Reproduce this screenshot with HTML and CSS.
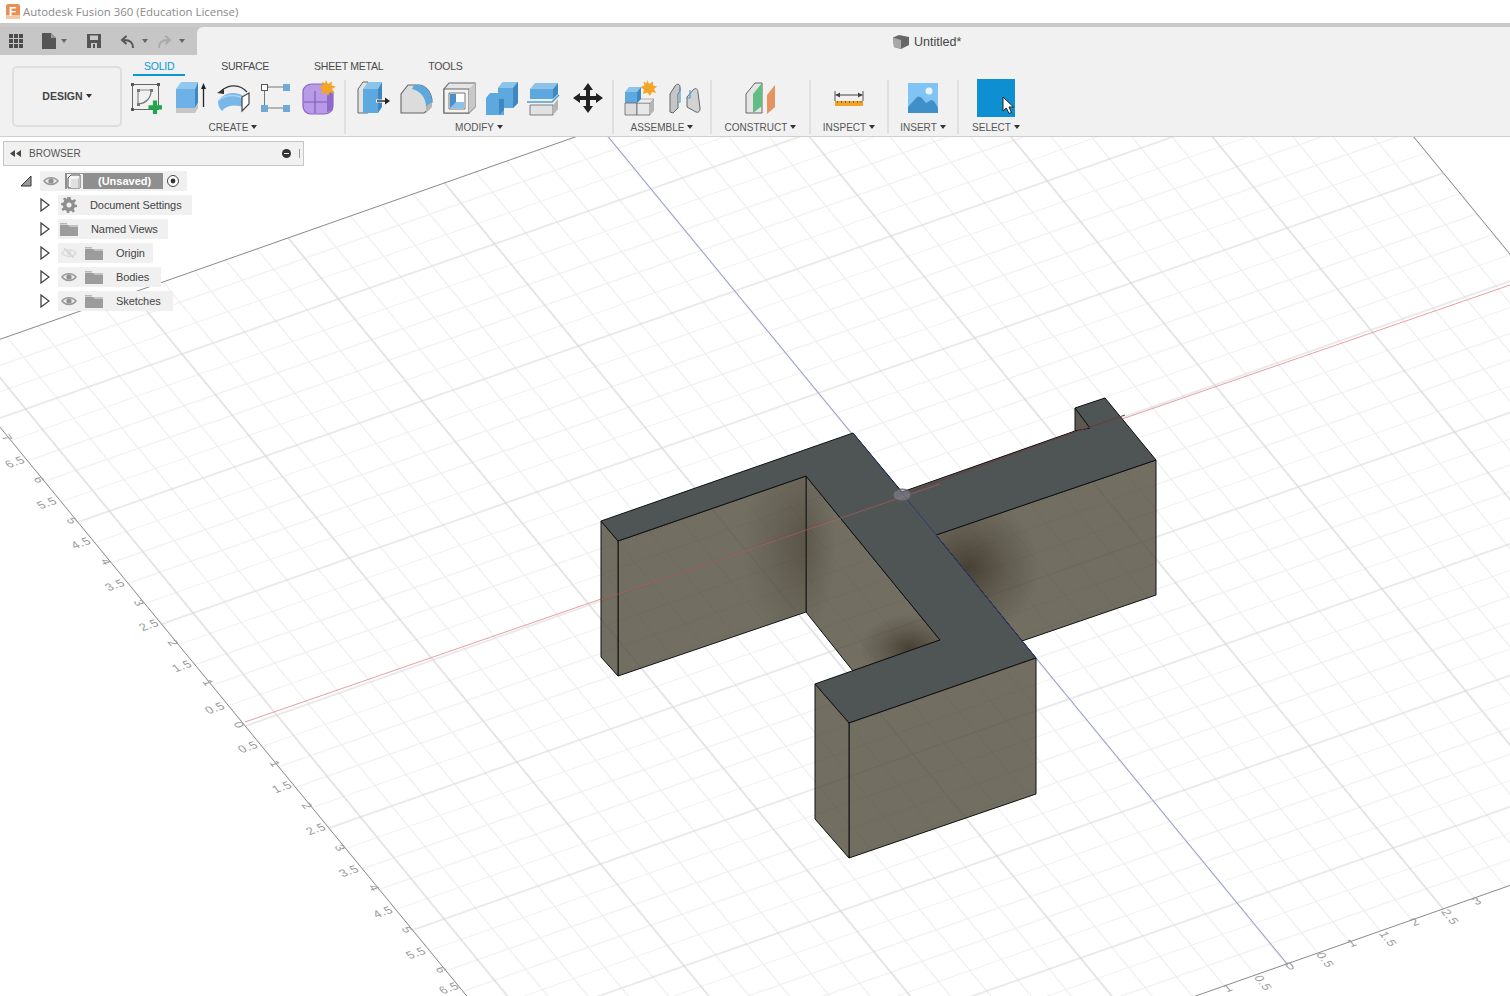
FILE: index.html
```html
<!DOCTYPE html>
<html lang="en">
<head>
<meta charset="utf-8">
<title>Autodesk Fusion 360</title>
<link rel="stylesheet" href="styles.css">
</head>
<body>
<svg class="defs" width="0" height="0" aria-hidden="true">
  <defs>
    <symbol id="eye" viewBox="0 0 16 12"><path d="M1 6C4 1.5 12 1.5 15 6C12 10.5 4 10.5 1 6Z" fill="#e8e8e8" stroke="#9a9a9a" stroke-width="1.5"/><circle cx="8" cy="6" r="2.6" fill="#8f8f8f"/></symbol>
    <symbol id="eye-off" viewBox="0 0 16 12"><path d="M1 6C4 1.5 12 1.5 15 6C12 10.5 4 10.5 1 6Z" fill="none" stroke="#dcdcdc" stroke-width="1.5"/><circle cx="8" cy="6" r="2.4" fill="#dcdcdc"/><path d="M3 1L13 11" stroke="#d4d4d4" stroke-width="1.5"/></symbol>
    <symbol id="folder" viewBox="0 0 18 14"><path d="M0 1H7V2.5H0Z" fill="#b5b5b5"/><path d="M0 3H18V14H0Z" fill="#9c9c9c"/><path d="M0 3H8L10 5H18V3Z" fill="#c4c4c4"/></symbol>
    <symbol id="expand" viewBox="0 0 10 14"><path d="M1 1L9 7L1 13Z" fill="#fff" stroke="#444" stroke-width="1.3"/></symbol>
  </defs>
</svg>

<div class="app">
  <header class="titlebar">
    <svg class="logo" viewBox="0 0 14 15"><rect width="14" height="15" rx="2" fill="#e98f56"/><rect y="11" width="14" height="4" fill="#f6c9a6"/><text x="3" y="12" class="logo-f">F</text></svg>
    <span class="app-title">Autodesk Fusion 360 (Education License)</span>
  </header>
  <div class="strip"></div>

  <div class="qat-row">
    <div class="qat">
      <svg class="qi qi-apps" viewBox="0 0 14 14"><path d="M0 0h4v4H0zM5 0h4v4H5zM10 0h4v4h-4zM0 5h4v4H0zM5 5h4v4H5zM10 5h4v4h-4zM0 10h4v4H0zM5 10h4v4H5zM10 10h4v4h-4z" fill="#4c4c4c"/></svg>
      <svg class="qi qi-file" viewBox="0 0 14 16"><path d="M0 0H9L14 5V16H0Z" fill="#555"/><path d="M9 0V5H14Z" fill="#999"/></svg>
      <i class="caret qc-file"></i>
      <svg class="qi qi-save" viewBox="0 0 14 14"><path d="M0 0H14V14H0Z" fill="#555"/><path d="M3 1.5H11V6H3Z" fill="#c8c8c8"/><path d="M4 9H10V14H4Z" fill="#c8c8c8"/><path d="M6 10H8V14H6Z" fill="#555"/></svg>
      <svg class="qi qi-undo" viewBox="0 0 14 13"><path d="M13 13C13 7 10 5 4 5M6.5 1L2 5L6.5 9" fill="none" stroke="#555" stroke-width="2"/></svg>
      <i class="caret qc-undo"></i>
      <svg class="qi qi-redo" viewBox="0 0 14 13"><path d="M1 13C1 7 4 5 10 5M7.5 1L12 5L7.5 9" fill="none" stroke="#a9a9a9" stroke-width="2"/></svg>
      <i class="caret qc-redo"></i>
    </div>
    <div class="doc-tab">
      <svg class="doc-cube" viewBox="0 0 16 14"><path d="M0 2.5L6 0L16 2L16 10L8 14L1 12Z" fill="#666"/><path d="M0 2.5L8 5V14L1 12Z" fill="#a8a8a8"/></svg>
      <span class="doc-name">Untitled*</span>
    </div>
  </div>

  <div class="ribbon">
    <button class="design-btn">DESIGN<i class="caret dark"></i></button>
    <div class="ribbon-main">
      <nav class="tabs">
        <span class="tab active">SOLID</span>
        <span class="tab">SURFACE</span>
        <span class="tab">SHEET METAL</span>
        <span class="tab">TOOLS</span>
      </nav>
      <div class="groups">
        <section class="group g-create">
          <div class="icons">
            <svg class="ti" viewBox="0 0 36 36">
              <rect x="3.5" y="4.5" width="26" height="25" fill="none" stroke="#666"/>
              <path d="M2 3h3v3H2zM28 3h3v3h-3zM2 28h3v3H2z" fill="#555"/>
              <path d="M9 10H23M9 10V25" stroke="#888" fill="none" stroke-width="1.2"/>
              <path d="M22 11C22 18 17 23 10 24" stroke="#777" fill="none" stroke-width="1.2"/>
              <path d="M8 9h3v3H8zM21 9h3v3h-3zM8 23h3v3H8z" fill="#777"/>
              <path d="M26 20.500V34M19.500 27.300H33" stroke="#21a650" stroke-width="4.200"/>
            </svg>
            <svg class="ti" viewBox="0 0 36 36">
              <path d="M4 9L9 2H26L23 9Z" fill="#93c8ee"/>
              <path d="M4 9H23V28H4Z" fill="#6db1e6"/>
              <path d="M23 9L26 2V23L23 28Z" fill="#3f87c0"/>
              <path d="M4 28H23L26 23V28L23 33H4Z" fill="#c6c6c6"/>
              <path d="M31.500 27V6" stroke="#222" stroke-width="1.300"/>
              <path d="M31.500 3L29 9H34Z" fill="#222"/>
            </svg>
            <svg class="ti" viewBox="0 0 36 36">
              <path d="M6 11C14 4 25 4 32 12" fill="none" stroke="#333" stroke-width="1.200"/>
              <path d="M2 13L9 8.500L9 14Z" fill="#333"/>
              <path d="M3 21C10 11 23 11 29 17L29 28C22 24 12 25 7 31C4 28 3 25 3 21Z" fill="#78b7e8"/>
              <path d="M3 21C10 14 22 14 29 19" fill="none" stroke="#a9d6f5" stroke-width="1.500"/>
              <path d="M27 17L34 13V24L27 31Z" fill="#fff" stroke="#444" stroke-width="1.200"/>
            </svg>
            <svg class="ti" viewBox="0 0 36 36">
              <path d="M11 7H26M7.500 10V25M11 28H26" stroke="#777"/>
              <rect x="4.500" y="4.500" width="6" height="6" fill="#fff" stroke="#555"/>
              <path d="M26 4h7v7h-7zM4 25h7v7H4zM26 25h7v7h-7z" fill="#6fa9d8"/>
            </svg>
            <svg class="ti" viewBox="0 0 36 36">
              <path d="M3 12C3 7 7 4 12 4H26L33 12V26C33 31 29 34 24 34H11C6 34 3 30 3 26Z" fill="#b99ae6" stroke="#8a66c4" stroke-width="1.200"/>
              <path d="M27 14C27 10 31 12 33 14V26C33 29 30 32 27 32Z" fill="#8f6bc9"/>
              <path d="M4 22H27M15 11V33" stroke="#7d5ab8" stroke-width="1.100"/>
              <path d="M26 0L28 4L32 1.500L31.500 5.500L36 6.500L32 9L34.500 13L30 12L28 16L25.500 12.500L21 14L22.500 9.500L18.500 7L23 5.500L22 1.500L25 3.500Z" fill="#f3a526"/>
            </svg>
          </div>
          <span class="glabel">CREATE<i class="caret dark"></i></span>
        </section>

        <section class="group g-modify">
          <div class="icons">
            <svg class="ti" viewBox="0 0 36 36">
              <path d="M3 9L8 2H13V33H3Z" fill="#e2e2e2" stroke="#666"/>
              <path d="M8 9H23V33H8Z" fill="#5ea8e0"/>
              <path d="M8 9L13 2H27L23 9Z" fill="#8cc3ea"/>
              <path d="M23 9L27 2V27L23 33Z" fill="#3f87c0"/>
              <path d="M21 21H31" stroke="#fff" stroke-width="3"/>
              <path d="M22 21H31" stroke="#222" stroke-width="1.400"/>
              <path d="M30 17.500L35 21L30 24.500Z" fill="#222"/>
            </svg>
            <svg class="ti" viewBox="0 0 36 36">
              <path d="M3 33V14L10 5H20C28 5 34 13 34 22L31 27V29L26 33Z" fill="#dcdcdc" stroke="#666" stroke-width="1.100"/>
              <path d="M16 5H20C28 5 34 13 34 22L28 27C28 18 23 11 14 9Z" fill="#5ea8e0"/>
              <path d="M28 27L34 22V27L28 33Z" fill="#b5b5b5"/>
            </svg>
            <svg class="ti" viewBox="0 0 36 36">
              <path d="M3 33V9L8 3H34V27L28 33Z" fill="#e5e5e5" stroke="#666" stroke-width="1.100"/>
              <path d="M3 9H28V33H3Z" fill="#f2f2f2" stroke="#666" stroke-width="1.100"/>
              <path d="M28 9L34 3V27L28 33Z" fill="#c8c8c8"/>
              <path d="M8 13H24V29H8Z" fill="#fff" stroke="#777"/>
              <path d="M9 14H15V22H23V28H9Z" fill="#4a90c8"/>
              <path d="M15 22H23V28H9Z" fill="#8ac2ec"/>
            </svg>
            <svg class="ti" viewBox="0 0 36 36">
              <path d="M14 8L19 2H34L34 23L29 28H14Z" fill="#5ea8e0"/>
              <path d="M14 8L19 2H34L29 8Z" fill="#8cc3ea"/>
              <path d="M29 8L34 2V23L29 28Z" fill="#3f87c0"/>
              <path d="M2 18L6 13H20V35H2Z" fill="#5ea8e0"/>
              <path d="M20 19V30L15 35V19Z" fill="#3f87c0"/>
            </svg>
            <svg class="ti" viewBox="0 0 36 36">
              <path d="M3 9L8 3H31L26 9Z" fill="#8cc3ea"/>
              <path d="M3 9H26V19H3Z" fill="#5ea8e0"/>
              <path d="M26 9L31 3V14L26 19Z" fill="#3f87c0"/>
              <path d="M3 25H26V35H3Z" fill="#e2e2e2" stroke="#666" stroke-width=".8"/>
              <path d="M26 25L31 19V29L26 35Z" fill="#b5b5b5"/>
              <path d="M0 22H25L32 15" stroke="#4a9ed6" stroke-width="1.600" fill="none"/>
            </svg>
            <svg class="ti" viewBox="0 0 36 36">
              <path d="M18 3L23 10H20V16H26V13L33 18L26 23V20H20V26H23L18 33L13 26H16V20H10V23L3 18L10 13V16H16V10H13Z" fill="#222"/>
            </svg>
          </div>
          <span class="glabel">MODIFY<i class="caret dark"></i></span>
        </section>

        <section class="group g-assemble">
          <div class="icons">
            <svg class="ti" viewBox="0 0 36 36">
              <path d="M3 12H15V23H3Z" fill="#5ea8e0"/>
              <path d="M3 12L7 7H19L15 12Z" fill="#8cc3ea"/>
              <path d="M15 12L19 7V19L15 23Z" fill="#3f87c0"/>
              <path d="M3 23H15V35H3Z" fill="#ddd" stroke="#666" stroke-width=".8"/>
              <path d="M15 23H28V35H15Z" fill="#e8e8e8" stroke="#666" stroke-width=".8"/>
              <path d="M28 23L32 19V31L28 35Z" fill="#b5b5b5"/>
              <path d="M15 23L19 19H32L28 23Z" fill="#ededed" stroke="#888" stroke-width=".6"/>
              <path d="M25 0L27 4L31 1.500L31 5.500L35 6.500L32 9L34 13L30 12L28 16L25.500 12.500L21 14L22 9.500L18.500 7L22.500 5.500L21.500 1.500L24.500 3.500Z" fill="#f3a526"/>
            </svg>
            <svg class="ti" viewBox="0 0 36 36">
              <path d="M4 14L9 6C11 3 14 4 14 7V11L12 14V28L7 33L4 32Z" fill="#c6c6c6" stroke="#666"/>
              <path d="M21 17L28 9C30 8 32 9 32 13L34 28C34 31 33 33 30 32L21 27Z" fill="#d2d2d2" stroke="#666"/>
              <path d="M14 8V22H12M24 10V18H20" stroke="#4a9ed6" fill="none" stroke-width="1.200"/>
            </svg>
          </div>
          <span class="glabel">ASSEMBLE<i class="caret dark"></i></span>
        </section>

        <section class="group g-construct">
          <div class="icons">
            <svg class="ti" viewBox="0 0 36 36">
              <path d="M3 14L12 3H19V33H3Z" fill="#e5e5e5" stroke="#666"/>
              <path d="M10 14L19 3V26L10 33Z" fill="#63bd83"/>
              <path d="M24 15L32 5V27L24 34Z" fill="#e6935f"/>
            </svg>
          </div>
          <span class="glabel">CONSTRUCT<i class="caret dark"></i></span>
        </section>

        <section class="group g-inspect">
          <div class="icons">
            <svg class="ti" viewBox="0 0 36 36">
              <path d="M4 11V21M32 11V21" stroke="#555"/>
              <path d="M4.500 15H31.500" stroke="#444"/>
              <path d="M4.500 15L9 12.500V17.500ZM31.500 15L27 12.500V17.500Z" fill="#444"/>
              <path d="M4 21H32V26H4Z" fill="#f0a428"/>
              <path d="M6.500 21V23M10.500 21V23M14.500 21V23M18.500 21V23M22.500 21V23M26.500 21V23M30 21V23" stroke="#8a5d10"/>
            </svg>
          </div>
          <span class="glabel">INSPECT<i class="caret dark"></i></span>
        </section>

        <section class="group g-insert">
          <div class="icons">
            <svg class="ti" viewBox="0 0 36 36">
              <path d="M3 3H33V33H3Z" fill="#7fc4f4"/>
              <circle cx="24" cy="11" r="3.500" fill="#e9f5fd"/>
              <path d="M3 27L12 17C15 15 18 19 21 23L26 20C29 20 31 24 33 28V33H3Z" fill="#3f8fc9"/>
            </svg>
          </div>
          <span class="glabel">INSERT<i class="caret dark"></i></span>
        </section>

        <section class="group g-select">
          <div class="icons select-icon">
            <svg class="sel" viewBox="0 0 38 38">
              <path d="M0 0H38V38H0Z" fill="#0e8fd2"/>
              <path d="M26 18V32L29.300 29L32 34.500L34.500 33.500L32 28H36.500Z" fill="#fff" stroke="#222" stroke-width="1"/>
            </svg>
          </div>
          <span class="glabel">SELECT<i class="caret dark"></i></span>
        </section>
      </div>
    </div>
  </div>

  <main class="viewport">
    <svg class="scene" viewBox="0 137 1510 859">
      <defs>
        <pattern id="grid" patternUnits="userSpaceOnUse" width="100" height="100" patternTransform="matrix(1.563 -.55 .837 1.02 902 495)">
          <path d="M20 0V100M40 0V100M60 0V100M80 0V100M0 20H100M0 40H100M0 60H100M0 80H100" stroke="#ececec" stroke-width=".7" fill="none"/>
          <path d="M0 0V100M100 0V100M0 0H100M0 100H100" stroke="#d6d6d6" stroke-width=".8" fill="none"/>
        </pattern>
        <pattern id="grid-ink" patternUnits="userSpaceOnUse" width="100" height="100" patternTransform="matrix(1.563 -.55 .837 1.02 902 495)">
          <path d="M20 0V100M40 0V100M60 0V100M80 0V100M0 20H100M0 40H100M0 60H100M0 80H100" stroke="#000" stroke-width=".5" fill="none"/>
          <path d="M0 0V100M100 0V100M0 0H100M0 100H100" stroke="#000" stroke-width="1" fill="none"/>
        </pattern>
        <radialGradient id="shade"><stop offset="0" stop-color="#3b3628" stop-opacity=".8"/><stop offset=".55" stop-color="#3b3628" stop-opacity=".3"/><stop offset="1" stop-color="#3b3628" stop-opacity="0"/></radialGradient>
        <clipPath id="c-left"><polygon points="618,541 806,476 806,612 618,676"/></clipPath>
        <clipPath id="c-inner"><polygon points="806,476 940,640 853,671 806,612"/></clipPath>
        <clipPath id="c-right"><polygon points="936,535 1156,460 1156,595 1022,641"/></clipPath>
        <clipPath id="c-walls">
          <polygon points="618,541 806,476 806,612 618,676"/>
          <polygon points="806,476 940,640 853,671 806,612"/>
          <polygon points="936,535 1156,460 1156,595 1022,641"/>
          <polygon points="849,723 1036,658 1036,794 849,858"/>
          <polygon points="815,684 849,723 849,858 815,819"/>
          <polygon points="601,521 618,541 618,676 601,657"/>
        </clipPath>
      </defs>

      <polygon class="plane" points="-56,359 1226,-92 1912,744 630,1195"/>
      <line class="axis-x" x1="245" y1="722" x2="1510" y2="285"/>
      <line class="axis-z" x1="601" y1="128" x2="1288" y2="965"/>

      <g class="labels">
        <text transform="matrix(.94 -.33 .63 .77 215 708)">0.5</text>
        <text transform="matrix(.94 -.33 .63 .77 182 666)">1.5</text>
        <text transform="matrix(.94 -.33 .63 .77 149 625)">2.5</text>
        <text transform="matrix(.94 -.33 .63 .77 115 585)">3.5</text>
        <text transform="matrix(.94 -.33 .63 .77 81 543)">4.5</text>
        <text transform="matrix(.94 -.33 .63 .77 47 503)">5.5</text>
        <text transform="matrix(.94 -.33 .63 .77 15 462)">6.5</text>
        <text transform="matrix(.63 .77 -.94 .33 239 725)">0</text>
        <text transform="matrix(.63 .77 -.94 .33 208 683)">1</text>
        <text transform="matrix(.63 .77 -.94 .33 173 643)">2</text>
        <text transform="matrix(.63 .77 -.94 .33 139 603)">3</text>
        <text transform="matrix(.63 .77 -.94 .33 106 562)">4</text>
        <text transform="matrix(.63 .77 -.94 .33 72 521)">5</text>
        <text transform="matrix(.63 .77 -.94 .33 39 480)">6</text>
        <text transform="matrix(.63 .77 -.94 .33 7 438)">7</text>
        <text transform="matrix(.94 -.33 .63 .77 248 747)">0.5</text>
        <text transform="matrix(.94 -.33 .63 .77 282 787)">1.5</text>
        <text transform="matrix(.94 -.33 .63 .77 316 829)">2.5</text>
        <text transform="matrix(.94 -.33 .63 .77 349 871)">3.5</text>
        <text transform="matrix(.94 -.33 .63 .77 383 912)">4.5</text>
        <text transform="matrix(.94 -.33 .63 .77 416 953)">5.5</text>
        <text transform="matrix(.94 -.33 .63 .77 449 988)">6.5</text>
        <text transform="matrix(.63 .77 -.94 .33 275 764)">1</text>
        <text transform="matrix(.63 .77 -.94 .33 307 806)">2</text>
        <text transform="matrix(.63 .77 -.94 .33 340 848)">3</text>
        <text transform="matrix(.63 .77 -.94 .33 374 888)">4</text>
        <text transform="matrix(.63 .77 -.94 .33 407 930)">5</text>
        <text transform="matrix(.63 .77 -.94 .33 441 970)">6</text>
        <text transform="matrix(.94 -.33 .63 .77 1290 966)">0</text>
        <text transform="matrix(.94 -.33 .63 .77 1352 943)">1</text>
        <text transform="matrix(.94 -.33 .63 .77 1415 922)">2</text>
        <text transform="matrix(.94 -.33 .63 .77 1477 901)">3</text>
        <text transform="matrix(.94 -.33 .63 .77 1228 988)">1</text>
        <text transform="matrix(.63 .77 -.94 .33 1325 960)">0.5</text>
        <text transform="matrix(.63 .77 -.94 .33 1388 939)">1.5</text>
        <text transform="matrix(.63 .77 -.94 .33 1450 917)">2.5</text>
        <text transform="matrix(.63 .77 -.94 .33 1263 983)">0.5</text>
      </g>

      <g class="body">
        <polygon class="wall" points="936,535 1156,460 1156,595 1022,641"/>
        <ellipse cx="968" cy="568" rx="72" ry="70" fill="url(#shade)" clip-path="url(#c-right)"/>
        <polygon class="wall" points="806,476 940,640 853,671 806,612"/>
        <ellipse cx="806" cy="545" rx="30" ry="90" fill="url(#shade)" opacity=".5" clip-path="url(#c-inner)"/>
        <ellipse cx="910" cy="648" rx="50" ry="34" fill="url(#shade)" clip-path="url(#c-inner)"/>
        <polygon class="wall" points="618,541 806,476 806,612 618,676"/>
        <ellipse cx="808" cy="545" rx="66" ry="110" fill="url(#shade)" opacity=".6" clip-path="url(#c-left)"/>
        <polygon class="wall" points="601,521 618,541 618,676 601,657"/>
        <polygon class="wall dark" points="1075,408 1090,428 1075,436"/>
        <polygon class="top" points="601,521 853,433 902,492 1075,431 1090,428 1075,408 1105,398 1156,460 936,535 1036,658 849,723 815,684 940,640 806,476 618,541"/>
        <polygon class="wall" points="849,723 1036,658 1036,794 849,858"/>
        <polygon class="wall" points="815,684 849,723 849,858 815,819"/>
      </g>
      <rect class="walls-grid" x="600" y="450" width="560" height="410" fill="url(#grid-ink)" clip-path="url(#c-walls)"/>
      <path class="axis-through" d="M601 600L806 530L940 484"/>
      <path class="axis-edge-x" d="M912 491L1075 432L1090 427L1125 415"/>
      <path class="axis-edge-z" d="M853 433L902 493L1036 658"/>
      <ellipse class="origin" cx="902" cy="495" rx="9" ry="6"/>
    </svg>

    <aside class="browser">
      <div class="browser-head">
        <svg class="rewind" viewBox="0 0 11 7"><path d="M5 0V7L0 3.500ZM11 0V7L6 3.500Z" fill="#444"/></svg>
        <span class="browser-title">BROWSER</span>
        <span class="minus"></span>
        <span class="grip"></span>
      </div>
      <ul class="tree">
        <li class="node root">
          <svg class="corner" viewBox="0 0 12 12"><path d="M11 1V11H1Z" fill="#999" stroke="#333"/></svg>
          <div class="pill">
            <svg class="eye"><use href="#eye"/></svg>
            <div class="sel-bar">
              <svg class="comp" viewBox="0 0 16 15"><path d="M1 4L4 1H13V14H1Z" fill="#f4f4f4" stroke="#555"/><path d="M4 5H11V14H4Z" fill="#e0e0e0"/><path d="M11 5L13 1V14H11Z" fill="#c4c4c4"/></svg>
              <span class="sel-text">(Unsaved)</span>
            </div>
            <svg class="radio" viewBox="0 0 14 14"><circle cx="7" cy="7" r="5.500" fill="#fff" stroke="#444"/><circle cx="7" cy="7" r="2.400" fill="#333"/></svg>
          </div>
        </li>
        <li class="node">
          <svg class="exp"><use href="#expand"/></svg>
          <div class="pill p-doc">
            <svg class="gear" viewBox="0 0 16 16"><path d="M6.500 0H9.500L10 2.400L11.700 3.200L13.800 1.900L15.100 4L13.300 5.600L13.600 7.300L16 8V10L13.600 10.500L12.800 12.200L14 14.300L11.900 15.600L10.300 13.800L8.700 14L8 16H6L5.500 13.700L3.800 12.900L1.800 14.100L.4 12L2.300 10.400L2.100 8.700L0 8V6L2.400 5.500L3.200 3.800L2 1.800L4.100 .5L5.700 2.300Z" fill="#8f8f8f"/><circle cx="8" cy="8" r="2.500" fill="#f0f0f0"/></svg>
            <span class="ntext t-doc">Document Settings</span>
          </div>
        </li>
        <li class="node">
          <svg class="exp"><use href="#expand"/></svg>
          <div class="pill p-views">
            <svg class="folder"><use href="#folder"/></svg>
            <span class="ntext t-doc">Named Views</span>
          </div>
        </li>
        <li class="node">
          <svg class="exp"><use href="#expand"/></svg>
          <div class="pill p-origin">
            <svg class="eye"><use href="#eye-off"/></svg>
            <svg class="folder f-in"><use href="#folder"/></svg>
            <span class="ntext">Origin</span>
          </div>
        </li>
        <li class="node">
          <svg class="exp"><use href="#expand"/></svg>
          <div class="pill p-bodies">
            <svg class="eye"><use href="#eye"/></svg>
            <svg class="folder f-in"><use href="#folder"/></svg>
            <span class="ntext">Bodies</span>
          </div>
        </li>
        <li class="node">
          <svg class="exp"><use href="#expand"/></svg>
          <div class="pill p-sketches">
            <svg class="eye"><use href="#eye"/></svg>
            <svg class="folder f-in"><use href="#folder"/></svg>
            <span class="ntext">Sketches</span>
          </div>
        </li>
      </ul>
    </aside>
  </main>
</div>
</body>
</html>
```

FILE: styles.css
```css
* { box-sizing: border-box; }
html, body { margin: 0; padding: 0; height: 100%; overflow: hidden; background: #fff; }
body { font-family: "Liberation Sans", Arial, sans-serif; font-size: 11px; color: #444; }
.defs { position: absolute; }
svg { display: block; flex: none; }
.app { display: flex; flex-direction: column; width: 1510px; height: 996px; }

.titlebar { height: 23px; background: #fff; display: flex; align-items: center; padding-left: 6px; gap: 3px; }
.logo { width: 14px; height: 15px; }
.logo-f { font-family: "Liberation Sans", sans-serif; font-weight: 700; font-size: 12px; fill: #fff; }
.app-title { font-family: "Open Sans", sans-serif; font-size: 11.400px; color: #8a8a8a; }
.strip { height: 4px; background: #cacaca; }

.qat-row { height: 28px; display: flex; background: #c6c6c6; }
.qat { width: 197px; height: 28px; display: flex; align-items: center; flex: none; }
.qi-apps { width: 14px; height: 14px; margin-left: 9px; }
.qi-file { width: 14px; height: 16px; margin-left: 19px; }
.qc-file { margin-left: 5px; }
.qi-save { width: 14px; height: 14px; margin-left: 20px; }
.qi-undo { width: 14px; height: 13px; margin-left: 19px; }
.qc-undo { margin-left: 8px; }
.qi-redo { width: 14px; height: 13px; margin-left: 10px; }
.qc-redo { margin-left: 7px; border-top-color: #a0a0a0; }
.caret { display: inline-block; width: 0; height: 0; border-left: 3px solid transparent; border-right: 3px solid transparent; border-top: 4px solid #666; }
.caret.dark { border-top-color: #333; margin-left: 3px; vertical-align: 2px; }

.doc-tab { flex: 1; background: #f1f1f1; border-top-left-radius: 6px; display: flex; align-items: center; padding: 1px 0 0 696px; }
.doc-cube { width: 16px; height: 14px; }
.doc-name { font-size: 12.500px; color: #444; margin-left: 5px; }

.ribbon { height: 82px; background: #f1f1f1; display: flex; border-bottom: 1px solid #cfcfcf; flex: none; }
.design-btn { width: 110px; height: 61px; margin: 11px 0 0 12px; background: #f1f1f1; border: 2px solid #dedede; border-radius: 5px; font: 700 10.500px/1 "Liberation Sans", sans-serif; color: #444; padding: 0 0 1px; }
.ribbon-main { flex: 1; display: flex; flex-direction: column; }
.tabs { height: 21px; display: flex; gap: 23px; padding-left: 11px; }
.tab { height: 21px; padding: 5px 11px 0; font-size: 10.500px; letter-spacing: -.25px; color: #4a4a4a; }
.tab.active { color: #0b96d4; border-bottom: 2px solid #0b96d4; margin-right: 2px; }

.groups { display: flex; height: 54px; margin-top: 4px; }
.group { display: flex; flex-direction: column; align-items: center; border-right: 2px solid #e0e0e0; }
.g-create { width: 224px; }
.g-modify { width: 268px; }
.g-assemble { width: 98px; }
.g-construct { width: 99px; }
.g-inspect { width: 78px; }
.g-insert { width: 70px; }
.g-select { width: 74px; border-right: 0; }
.icons { display: flex; height: 36px; }
.g-create .icons { gap: 6.750px; margin-left: -1px; }
.g-modify .icons { gap: 7px; margin-left: 3px; }
.g-assemble .icons { gap: 8px; }
.ti { width: 36px; height: 36px; }
.select-icon { height: 38px; margin-top: -1px; margin-bottom: -1px; }
.sel { width: 38px; height: 38px; }
.glabel { margin-top: 6px; font-size: 10px; line-height: 12px; color: #555; white-space: nowrap; }

.viewport { position: relative; flex: 1; background: #fff; overflow: hidden; }
.scene { width: 1510px; height: 859px; }
.plane { fill: url(#grid); stroke: #8b8b8b; stroke-width: 1; }
.axis-x { stroke: #e6a0a0; stroke-width: 1; }
.axis-z { stroke: #9498d8; stroke-width: 1; }
.labels text { font-family: "Liberation Sans", sans-serif; font-size: 12px; letter-spacing: .6px; fill: #999; text-anchor: middle; dominant-baseline: central; }
.wall { fill: #736e62; stroke: #111; stroke-width: 1; stroke-linejoin: round; }
.wall.dark { fill: #5c5a50; }
.top { fill: #4f5555; stroke: #111; stroke-width: 1; stroke-linejoin: round; }
.walls-grid { opacity: .05; }
.axis-through { fill: none; stroke: #c05a5a; stroke-width: 1; opacity: .6; }
.axis-edge-x { fill: none; stroke: #6a3c3c; stroke-width: 1; }
.axis-edge-z { fill: none; stroke: #2e3a78; stroke-width: 1; }
.origin { fill: #8d8895; fill-opacity: .55; stroke: #555; stroke-width: 1; }

.browser { position: absolute; left: 3px; top: 4px; width: 301px; }
.browser-head { height: 25px; background: #f1f1f1; border: 1px solid #c6c6c6; display: flex; align-items: center; padding-left: 6px; }
.rewind { width: 11px; height: 7px; }
.browser-title { margin-left: 8px; font-size: 10px; color: #555; flex: 1; }
.minus { width: 9px; height: 9px; border-radius: 50%; background: #333; position: relative; margin-right: 8px; }
.minus::after { content: ""; position: absolute; left: 2px; right: 2px; top: 4px; height: 1px; background: #f1f1f1; }
.grip { width: 2px; height: 9px; border-left: 1px solid #999; margin-right: 2px; }

.tree { list-style: none; margin: 3px 0 0; padding: 0; }
.node { height: 24px; display: flex; align-items: center; padding-left: 37px; }
.root { padding-left: 17px; }
.corner { width: 12px; height: 12px; margin-right: 8px; }
.exp { width: 10px; height: 14px; margin-right: 8px; }
.pill { height: 20px; background: #f0f0f0; display: flex; align-items: center; color: #444; }
.eye { width: 16px; height: 12px; margin-left: 3px; }
.root .pill { width: 147px; }
.sel-bar { width: 98px; height: 16px; margin-left: 6px; background: #8f8f8f; display: flex; align-items: center; }
.comp { width: 16px; height: 15px; margin-left: 2px; background: #f0f0f0; }
.sel-text { font-weight: 700; color: #fff; margin-left: 15px; }
.radio { width: 14px; height: 14px; margin-left: 3px; }
.gear { width: 16px; height: 16px; margin-left: 3px; }
.folder { width: 18px; height: 14px; margin-left: 2px; }
.f-in { margin-left: 8px; }
.ntext { margin-left: 13px; font-size: 11px; letter-spacing: -.08px; white-space: nowrap; }
.t-doc { margin-left: 13px; }
.p-doc { width: 134px; }
.p-views { width: 110px; }
.p-origin { width: 95px; }
.p-bodies { width: 103px; }
.p-sketches { width: 115px; }
```
